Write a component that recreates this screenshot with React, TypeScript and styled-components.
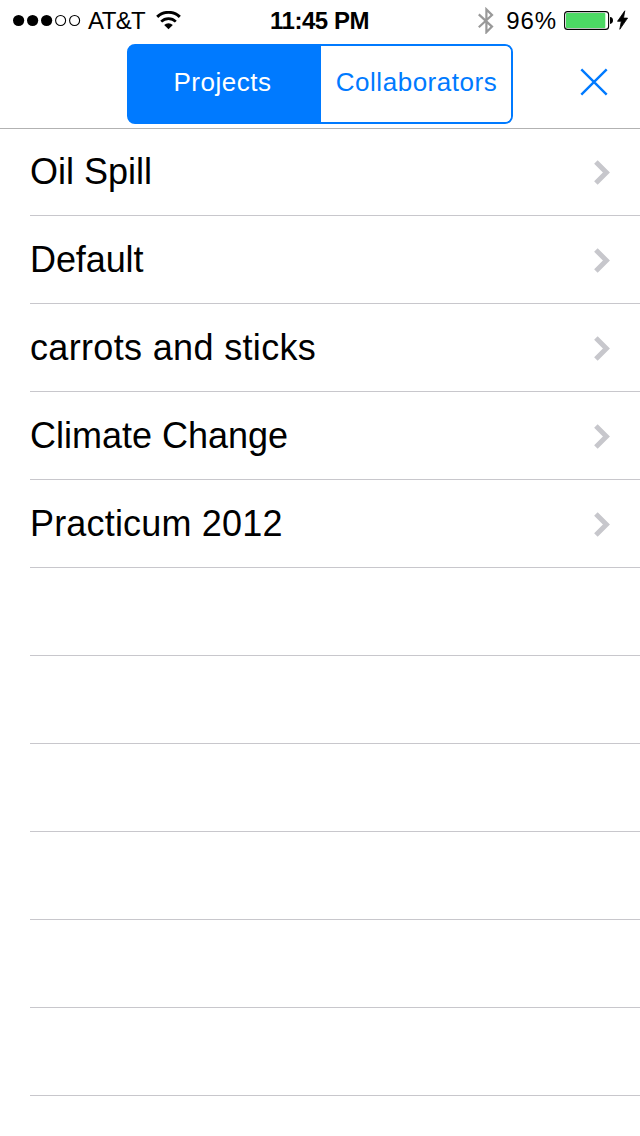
import React from 'react';
import styled, { createGlobalStyle } from 'styled-components';

const BLUE = '#007aff';

const GlobalStyle = createGlobalStyle`
  * { box-sizing: border-box; }
  body {
    margin: 0;
    background: #fff;
    color: #000;
    font-family: "Liberation Sans", Arial, sans-serif;
  }
`;

const Screen = styled.div`
  width: 640px;
  height: 1136px;
  overflow: hidden;
  display: flex;
  flex-direction: column;
  background: #fff;
`;

const StatusBar = styled.header`
  height: 41px;
  flex: none;
  display: grid;
  grid-template-columns: 1fr auto 1fr;
  align-items: center;
  padding: 0 12px 0 13px;
  font-size: 24px;
  line-height: 41px;
`;

const StatusGroup = styled.div<{ $end?: boolean }>`
  display: flex;
  align-items: center;
  justify-content: ${(p) => (p.$end ? 'flex-end' : 'flex-start')};
  height: 41px;
  svg { flex: none; display: block; }
`;

const StatusText = styled.span<{ $spacing?: number; $left?: number; $right?: number }>`
  letter-spacing: ${(p) => p.$spacing ?? 0}px;
  margin-left: ${(p) => p.$left ?? 0}px;
  margin-right: ${(p) => p.$right ?? 0}px;
  white-space: nowrap;
`;

const Clock = styled.time`
  font-weight: 700;
  font-size: 24px;
  letter-spacing: -0.45px;
  margin-right: 2px;
`;

const NavBar = styled.nav`
  height: 87px;
  flex: none;
  display: grid;
  grid-template-columns: 127px 386px 127px;
  padding-top: 3px;
  box-shadow: 0 1px 0 #b2b2b2;
  position: relative;
`;

const Segmented = styled.div`
  grid-column: 2;
  height: 80px;
  display: flex;
  border: 2px solid ${BLUE};
  border-radius: 8px;
  background: linear-gradient(to right, ${BLUE} 50%, #fff 50%);
  overflow: hidden;
`;

const Segment = styled.button<{ $active?: boolean; $spacing: number }>`
  flex: none;
  width: ${(p) => (p.$active ? 192 : 190)}px;
  border: 0;
  padding: ${(p) => (p.$active ? '0 5px 4px 0' : '0 0 4px 1px')};
  background: ${(p) => (p.$active ? BLUE : '#fff')};
  color: ${(p) => (p.$active ? '#fff' : BLUE)};
  font: 26px "Liberation Sans", Arial, sans-serif;
  letter-spacing: ${(p) => p.$spacing}px;
`;

const CloseButton = styled.button`
  border: 0;
  background: none;
  padding: 24px 32px 0 0;
  display: flex;
  justify-content: flex-end;
`;

const List = styled.ul`
  list-style: none;
  margin: 0;
  padding: 0 0 0 30px;
`;

const Row = styled.li`
  height: 88px;
  display: flex;
  align-items: center;
  justify-content: space-between;
  padding: 2px 30px 0 0;
  border-bottom: 1px solid #c8c7cc;
`;

const RowLabel = styled.span<{ $spacing: number }>`
  font-size: 36px;
  line-height: 44px;
  margin-bottom: 2px;
  letter-spacing: ${(p) => p.$spacing}px;
  white-space: nowrap;
`;

const projects = [
  { name: 'Oil Spill', spacing: 0 },
  { name: 'Default', spacing: -0.1 },
  { name: 'carrots and sticks', spacing: 0.34 },
  { name: 'Climate Change', spacing: 0 },
  { name: 'Practicum 2012', spacing: 0.18 },
];

const Signal = () => (
  <svg width="68" height="13" viewBox="0 0 68 13">
    {[0, 1, 2, 3, 4].map((i) => (
      <circle key={i} cx={5.6 + i * 14} cy="6.5" r={i < 3 ? 5.6 : 5}
        fill={i < 3 ? '#000' : 'none'} stroke={i < 3 ? 'none' : '#000'} strokeWidth="1.1" />
    ))}
  </svg>
);

const Wifi = () => (
  <svg width="26" height="19" viewBox="0 0 26 19">
    <path d="M2.2 5.9A16.3 16.3 0 0 1 24.8 5.9" fill="none" stroke="#000" strokeWidth="3" />
    <path d="M6.2 10.6A10.4 10.4 0 0 1 20.8 10.6" fill="none" stroke="#000" strokeWidth="2.7" />
    <path d="M9.2 13.9A6.2 6.2 0 0 1 17.8 13.9L13.5 18.3Z" />
  </svg>
);

const Bluetooth = () => (
  <svg width="16" height="27" viewBox="0 0 16 27">
    <path d="M0.8 7.4L14 19.6L8.4 25.2V2.4L14 8L0.8 20.2" fill="none" stroke="#999" strokeWidth="2.2" />
  </svg>
);

const Battery = () => (
  <svg width="50" height="19" viewBox="0 0 50 19">
    <rect x="0.6" y="0.6" width="44" height="17.8" rx="3" fill="#fff" stroke="#000" strokeWidth="1.1" />
    <rect x="2" y="2" width="39.3" height="15" rx="0.8" fill="#4cd964" />
    <path d="M46 6.1Q49 6.5 49 9.5Q49 12.5 46 12.9Z" />
  </svg>
);

const Bolt = () => (
  <svg width="11" height="21" viewBox="0 0 11 21">
    <path d="M7.8 0.8L0.5 11.3H4.3L2.8 19.3L10.6 8.1H6.5Z" stroke="#000" strokeWidth="0.8" />
  </svg>
);

const Close = () => (
  <svg width="28" height="28" viewBox="0 0 28 28">
    <path d="M1.3 1.3L26.7 26.7M26.7 1.3L1.3 26.7" stroke={BLUE} strokeWidth="2.4" fill="none" />
  </svg>
);

const Chevron = () => (
  <svg width="16" height="25" viewBox="0 0 16 25">
    <path d="M1.9 2L12.4 12.5L1.9 23" fill="none" stroke="#c7c7cc" strokeWidth="5" />
  </svg>
);

export default function App() {
  return (
    <Screen>
      <GlobalStyle />
      <StatusBar>
        <StatusGroup>
          <Signal />
          <StatusText $left={7} $right={10} $spacing={-0.6}>AT&amp;T</StatusText>
          <Wifi />
        </StatusGroup>
        <Clock>11:45 PM</Clock>
        <StatusGroup $end>
          <Bluetooth />
          <StatusText $left={12} $right={7} $spacing={0.9}>96%</StatusText>
          <Battery />
          <StatusText $left={3} />
          <Bolt />
        </StatusGroup>
      </StatusBar>
      <NavBar>
        <Segmented>
          <Segment $active $spacing={0.5}>Projects</Segment>
          <Segment $spacing={0.52}>Collaborators</Segment>
        </Segmented>
        <CloseButton aria-label="Close"><Close /></CloseButton>
      </NavBar>
      <List>
        {projects.map((p) => (
          <Row key={p.name}>
            <RowLabel $spacing={p.spacing}>{p.name}</RowLabel>
            <Chevron />
          </Row>
        ))}
        {Array.from({ length: 6 }, (_, i) => <Row key={i} />)}
      </List>
    </Screen>
  );
}
